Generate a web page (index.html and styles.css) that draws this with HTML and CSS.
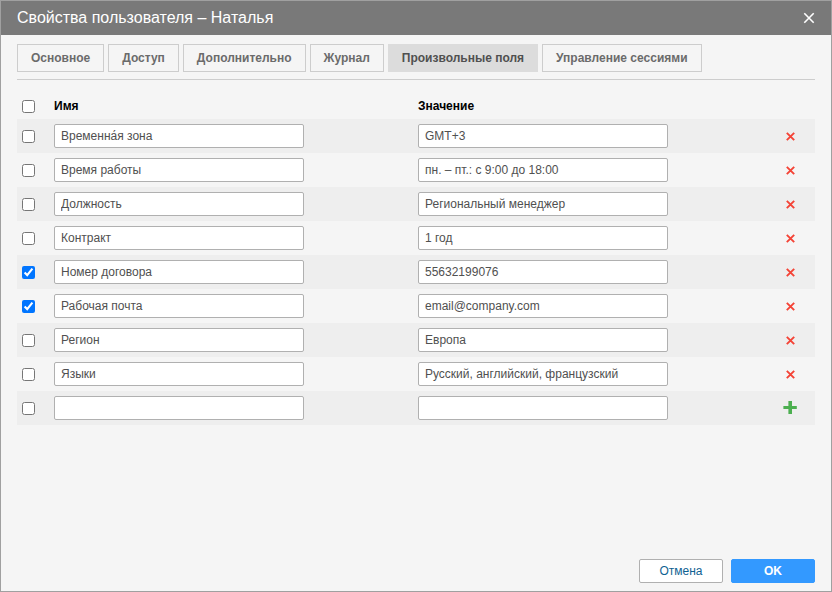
FILE: index.html
```html
<!DOCTYPE html>
<html lang="ru">
<head>
<meta charset="utf-8">
<title>Свойства пользователя – Наталья</title>
<link rel="stylesheet" href="styles.css">
</head>
<body>
<main class="dialog">
  <header class="titlebar">
    <h1>Свойства пользователя – Наталья</h1>
    <button class="close" type="button" aria-label="Закрыть"><svg viewBox="0 0 12 12"><path d="M1.3 1.3 10.7 10.7M10.7 1.3 1.3 10.7"/></svg></button>
  </header>
  <div class="content">
    <nav class="tabs">
      <button type="button">Основное</button>
      <button type="button">Доступ</button>
      <button type="button">Дополнительно</button>
      <button type="button">Журнал</button>
      <button type="button" class="active">Произвольные поля</button>
      <button type="button">Управление сессиями</button>
    </nav>
    <table class="fields">
      <thead>
        <tr>
          <th class="check"><input type="checkbox" aria-label="Выбрать все"></th>
          <th class="name">Имя</th>
          <th class="value">Значение</th>
          <th class="action"></th>
        </tr>
      </thead>
      <tbody>
        <tr>
          <td><input type="checkbox" aria-label="Выбрать"></td>
          <td><input type="text" aria-label="Имя" value="Временна́я зона"></td>
          <td><input type="text" aria-label="Значение" value="GMT+3"></td>
          <td><button class="icon remove" type="button" aria-label="Удалить"><svg viewBox="0 0 14 14"><path d="M3.8 3.8 11.2 11.2M11.2 3.8 3.8 11.2"/></svg></button></td>
        </tr>
        <tr>
          <td><input type="checkbox" aria-label="Выбрать"></td>
          <td><input type="text" aria-label="Имя" value="Время работы"></td>
          <td><input type="text" aria-label="Значение" value="пн. – пт.: с 9:00 до 18:00"></td>
          <td><button class="icon remove" type="button" aria-label="Удалить"><svg viewBox="0 0 14 14"><path d="M3.8 3.8 11.2 11.2M11.2 3.8 3.8 11.2"/></svg></button></td>
        </tr>
        <tr>
          <td><input type="checkbox" aria-label="Выбрать"></td>
          <td><input type="text" aria-label="Имя" value="Должность"></td>
          <td><input type="text" aria-label="Значение" value="Региональный менеджер"></td>
          <td><button class="icon remove" type="button" aria-label="Удалить"><svg viewBox="0 0 14 14"><path d="M3.8 3.8 11.2 11.2M11.2 3.8 3.8 11.2"/></svg></button></td>
        </tr>
        <tr>
          <td><input type="checkbox" aria-label="Выбрать"></td>
          <td><input type="text" aria-label="Имя" value="Контракт"></td>
          <td><input type="text" aria-label="Значение" value="1 год"></td>
          <td><button class="icon remove" type="button" aria-label="Удалить"><svg viewBox="0 0 14 14"><path d="M3.8 3.8 11.2 11.2M11.2 3.8 3.8 11.2"/></svg></button></td>
        </tr>
        <tr>
          <td><input type="checkbox" aria-label="Выбрать" checked></td>
          <td><input type="text" aria-label="Имя" value="Номер договора"></td>
          <td><input type="text" aria-label="Значение" value="55632199076"></td>
          <td><button class="icon remove" type="button" aria-label="Удалить"><svg viewBox="0 0 14 14"><path d="M3.8 3.8 11.2 11.2M11.2 3.8 3.8 11.2"/></svg></button></td>
        </tr>
        <tr>
          <td><input type="checkbox" aria-label="Выбрать" checked></td>
          <td><input type="text" aria-label="Имя" value="Рабочая почта"></td>
          <td><input type="text" aria-label="Значение" value="email@company.com"></td>
          <td><button class="icon remove" type="button" aria-label="Удалить"><svg viewBox="0 0 14 14"><path d="M3.8 3.8 11.2 11.2M11.2 3.8 3.8 11.2"/></svg></button></td>
        </tr>
        <tr>
          <td><input type="checkbox" aria-label="Выбрать"></td>
          <td><input type="text" aria-label="Имя" value="Регион"></td>
          <td><input type="text" aria-label="Значение" value="Европа"></td>
          <td><button class="icon remove" type="button" aria-label="Удалить"><svg viewBox="0 0 14 14"><path d="M3.8 3.8 11.2 11.2M11.2 3.8 3.8 11.2"/></svg></button></td>
        </tr>
        <tr>
          <td><input type="checkbox" aria-label="Выбрать"></td>
          <td><input type="text" aria-label="Имя" value="Языки"></td>
          <td><input type="text" aria-label="Значение" value="Русский, английский, французский"></td>
          <td><button class="icon remove" type="button" aria-label="Удалить"><svg viewBox="0 0 14 14"><path d="M3.8 3.8 11.2 11.2M11.2 3.8 3.8 11.2"/></svg></button></td>
        </tr>
        <tr>
          <td><input type="checkbox" aria-label="Выбрать"></td>
          <td><input type="text" aria-label="Имя"></td>
          <td><input type="text" aria-label="Значение"></td>
          <td><button class="icon add" type="button" aria-label="Добавить"><svg viewBox="0 0 14 14"><path d="M5.4 0H9V5H13.8V8H9V13H5.4V8H0.4V5H5.4Z"/></svg></button></td>
        </tr>
      </tbody>
    </table>
  </div>
  <footer class="actions">
    <button class="btn" type="button">Отмена</button>
    <button class="btn primary" type="button">OK</button>
  </footer>
</main>
</body>
</html>
```
FILE: styles.css
```css
* {
  box-sizing: border-box;
}

body {
  margin: 0;
  background: #f5f5f5;
  font: 12px "Liberation Sans", Arial, sans-serif;
}

button,
input {
  font: inherit;
}

button {
  cursor: pointer;
}

.dialog {
  display: flex;
  flex-direction: column;
  min-height: 100vh;
  border: 1px solid #a0a0a0;
  background: #f5f5f5;
}

.titlebar {
  display: flex;
  align-items: center;
  justify-content: space-between;
  height: 34px;
  padding: 0 16px;
  background: #797979;
  color: #fff;
}

.titlebar h1 {
  margin: 0;
  font-size: 16px;
  font-weight: 400;
}

.close {
  display: flex;
  padding: 0;
  border: 0;
  background: none;
}

.close svg {
  width: 12px;
  height: 12px;
  stroke: #fff;
  stroke-width: 1.6;
}

.content {
  flex: 1;
  padding: 9px 16px;
}

.tabs {
  display: flex;
  gap: 4px;
  padding-bottom: 7px;
  border-bottom: 1px solid #cdcdcd;
}

.tabs button {
  height: 28px;
  padding: 0 13px;
  border: 1px solid #cdcdcd;
  background: #f5f5f5;
  color: #6b6b6b;
  font-weight: 700;
}

.tabs .active {
  border-color: #dcdcdc;
  background: #dcdcdc;
  color: #505050;
}

.fields {
  width: 100%;
  margin-top: 13px;
  border-collapse: collapse;
  table-layout: fixed;
}

.fields th,
.fields td {
  padding: 0;
  text-align: left;
  vertical-align: middle;
}

.fields th {
  height: 26px;
}

.fields td {
  height: 34px;
}

.fields .check {
  width: 37px;
}

.fields .name {
  width: 364px;
}

.fields .action {
  width: 32px;
}

.fields tbody tr:nth-child(odd) {
  background: #eee;
}

.fields input[type="checkbox"] {
  display: block;
  width: 13px;
  height: 13px;
  margin: 1px 0 0 5px;
}

.fields input[type="text"] {
  display: block;
  width: 250px;
  height: 24px;
  padding: 0 6px;
  border: 1px solid #b0b0b0;
  border-radius: 2px;
  background: #fff;
  color: #505050;
}

.icon {
  display: block;
  padding: 0;
  border: 0;
  background: none;
}

.icon svg {
  display: block;
  width: 14px;
  height: 14px;
}

.remove svg {
  stroke: #f44336;
  stroke-width: 1.9;
}

.add svg {
  fill: #4caf50;
}

.actions {
  display: flex;
  justify-content: flex-end;
  gap: 8px;
  padding: 0 16px 8px;
}

.btn {
  width: 84px;
  height: 24px;
  padding: 0;
  border: 1px solid #b0b0b0;
  border-radius: 2px;
  background: #fff;
  color: #0f6292;
}

.primary {
  border-color: #39f;
  background: #39f;
  color: #fff;
  font-weight: 700;
}
```
